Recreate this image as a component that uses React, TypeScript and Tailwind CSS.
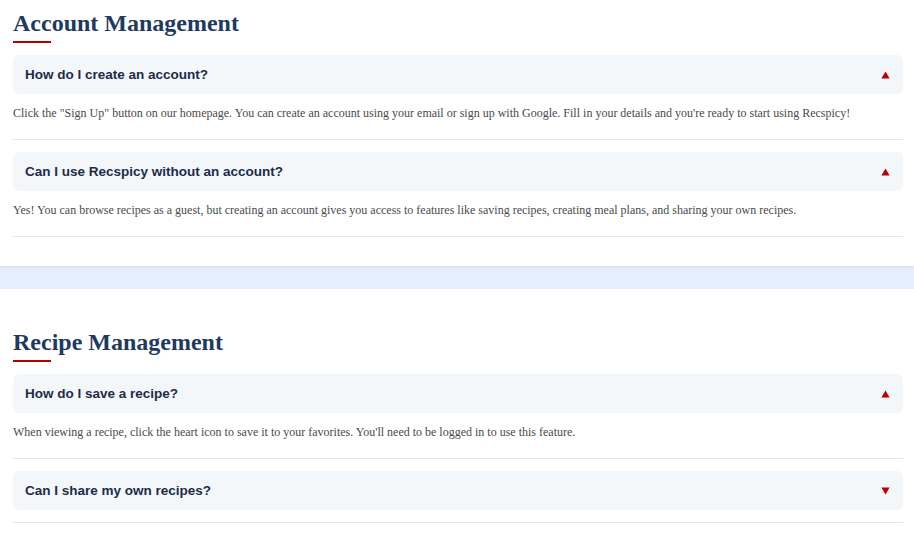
import { useState } from "react";

type Faq = { q: string; a: string };

const sections: { title: string; items: Faq[]; open: boolean[] }[] = [
  {
    title: "Account Management",
    open: [true, true],
    items: [
      {
        q: "How do I create an account?",
        a: 'Click the "Sign Up" button on our homepage. You can create an account using your email or sign up with Google. Fill in your details and you\'re ready to start using Recspicy!',
      },
      {
        q: "Can I use Recspicy without an account?",
        a: "Yes! You can browse recipes as a guest, but creating an account gives you access to features like saving recipes, creating meal plans, and sharing your own recipes.",
      },
    ],
  },
  {
    title: "Recipe Management",
    open: [true, false],
    items: [
      {
        q: "How do I save a recipe?",
        a: "When viewing a recipe, click the heart icon to save it to your favorites. You'll need to be logged in to use this feature.",
      },
      {
        q: "Can I share my own recipes?",
        a: "Yes! Once logged in, use the \"Add Recipe\" button to share your own recipes with the community.",
      },
    ],
  },
];

function Arrow({ up }: { up: boolean }) {
  return (
    <svg width="9" height="8" viewBox="0 0 9 8" className={up ? "" : "rotate-180"}>
      <path d="M4.5 0.5 L8.6 7.6 L0.4 7.6 Z" fill="#b80000" />
    </svg>
  );
}

function FaqItem({ item, initial }: { item: Faq; initial: boolean }) {
  const [open, setOpen] = useState(initial);
  return (
    <div className="border-b border-[#e2e8f0] pb-[12px] mt-[12px] first:mt-0">
      <button
        className="w-full flex items-center justify-between rounded-md bg-[#f4f7fa] pl-[12px] pr-[13px] py-[11px] text-left"
        onClick={() => setOpen(!open)}
      >
        <span className="text-[13.5px] leading-[17px] font-bold text-[#1c2b4a] font-['Liberation_Sans',Arial,sans-serif]">
          {item.q}
        </span>
        <Arrow up={open} />
      </button>
      {open && (
        <p className="pt-[11px] pb-[6px] text-[12px] leading-[16px] text-[#4a4a4a] font-['Liberation_Serif','Times_New_Roman',serif]">
          {item.a}
        </p>
      )}
    </div>
  );
}

export default function App() {
  return (
    <div className="min-h-[549px] bg-[#e6effd] font-['Liberation_Serif',serif]">
      {sections.map((s, i) => (
        <section
          key={s.title}
          className={
            i === 0
              ? "bg-white pl-[13px] pr-[11px] pt-[9px] pb-[29px] shadow-[0_1px_3px_rgba(0,0,0,0.08)]"
              : "bg-white pl-[13px] pr-[11px] pt-[39px] pb-[26px] mt-[23px]"
          }
        >
          <h2 className="text-[24px] leading-[29px] font-bold text-[#1e3a5f] font-['Liberation_Serif','Times_New_Roman',serif]">
            {s.title}
          </h2>
          <div className="w-[38px] h-[2px] bg-[#b80000] mt-[3px] mb-[12px]" />
          <div>
            {s.items.map((it, j) => (
              <FaqItem key={it.q} item={it} initial={s.open[j]} />
            ))}
          </div>
        </section>
      ))}
    </div>
  );
}
